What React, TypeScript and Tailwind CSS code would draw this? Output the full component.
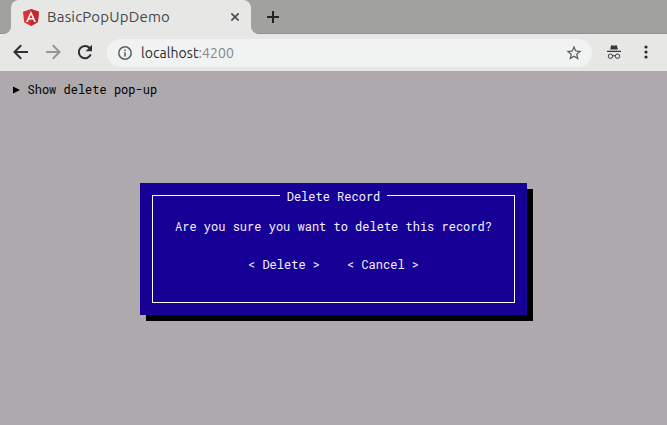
import React from "react";

function AngularLogo() {
  return (
    <svg width="16" height="17" viewBox="0 0 16 17" className="shrink-0">
      <path d="M8 0 0 2.8l1.2 10.4L8 17l6.8-3.8L16 2.8z" fill="#dd3035" />
      <path d="M8 0v17l6.8-3.8L16 2.8z" fill="#c12a32" />
      <path d="M8 1.9 3 13h1.9l1-2.5h4.2l1 2.5H13zm0 3.6L9.5 9h-3z" fill="#fff" fillRule="evenodd" />
    </svg>
  );
}

function TabStrip() {
  return (
    <div className="flex h-[34px] bg-[#e7e7e5]">
      <div className="w-[11px] rounded-br-lg border-b border-[#92918f] bg-[#a1a19f]" />
      <div className="w-[240px] bg-[linear-gradient(#a1a19f_50%,#e7e7e5_50%)]">
        <div className="flex h-full items-center rounded-t-lg bg-[#e7e7e5] pl-3">
          <AngularLogo />
          <span className="ml-2 w-[124px] whitespace-nowrap font-['Ubuntu','Noto_Sans',sans-serif] text-[15px] tracking-[0.013em] text-[#45494d]">
            BasicPopUpDemo
          </span>
          <svg width="8" height="8" viewBox="0 0 8 8" className="ml-[60px]" stroke="#4b4e51" strokeWidth="1.7">
            <path d="M.4.4l7.2 7.2M7.6.4.4 7.6" />
          </svg>
        </div>
      </div>
      <div className="flex flex-1 items-center rounded-bl-lg border-b border-[#92918f] bg-[#a1a19f] pl-4">
        <svg width="12" height="12" viewBox="0 0 12 12" stroke="#222426" strokeWidth="2">
          <path d="M6 0v12M0 6h12" />
        </svg>
      </div>
    </div>
  );
}

function Toolbar() {
  return (
    <div className="flex h-[37px] items-center bg-[#e7e7e5] pl-[13px] pt-px">
      <svg width="16" height="16" viewBox="0 0 16 16" fill="none" stroke="#2d3134" strokeWidth="2" className="-mt-0.5">
        <path d="M15 8H2M8.2 1.3 1.5 8l6.7 6.7" />
      </svg>
      <svg width="16" height="16" viewBox="0 0 16 16" fill="none" stroke="#969795" strokeWidth="2" className="-mt-0.5 ml-4">
        <path d="M1 8h13M7.8 1.3 14.5 8l-6.7 6.7" />
      </svg>
      <svg width="16" height="16" viewBox="0 0 16 16" className="-mt-0.5 ml-4">
        <path d="M13.8 10.4A6.2 6.2 0 1 1 12.7 4" fill="none" stroke="#2d3134" strokeWidth="2" />
        <path d="M15 .8v6.4H8.6z" fill="#2d3134" />
      </svg>
      <div className="ml-[14px] flex h-7 w-[485px] items-center rounded-full bg-[#f0f3f2] pl-[11px] pr-[9px]">
        <svg width="14" height="14" viewBox="0 0 14 14" fill="none" stroke="#5c6064" strokeWidth="1.5">
          <circle cx="7" cy="7" r="6.2" />
          <path d="M7 6.2v4.3M7 3.4v1.5" strokeWidth="1.6" />
        </svg>
        <span className="ml-[9px] flex-1 font-['Ubuntu','Noto_Sans',sans-serif] text-sm tracking-[0.005em] text-[#292c2f]">
          localhost<span className="text-[#7f868c]">:4200</span>
        </span>
        <svg width="18" height="18" viewBox="0 0 24 24" fill="#56595d">
          <path d="M22 9.24l-7.19-.62L12 2 9.19 8.63 2 9.24l5.46 4.73L5.82 21 12 17.27 18.18 21l-1.63-7.03L22 9.24zM12 15.4l-3.76 2.27 1-4.28-3.32-2.88 4.38-.38L12 6.1l1.71 4.04 4.38.38-3.32 2.88 1 4.28L12 15.4z" />
        </svg>
      </div>
      <svg width="14" height="14" viewBox="0 0 14 14" className="-mt-0.5 ml-[15px]">
        <path d="M3.2 4.5 4 .7Q4.2 0 5 .2l2 .5 2-.5q.8-.2 1 .5l.8 3.8zM0 5.7h14v1.2H0z" fill="#36393b" />
        <g fill="none" stroke="#36393b">
          <circle cx="3.5" cy="11.2" r="2.2" />
          <circle cx="10.5" cy="11.2" r="2.2" />
          <path d="M5.7 11q1.3-.8 2.6 0" />
        </g>
      </svg>
      <svg width="4" height="14" viewBox="0 0 4 14" fill="#292c2f" className="-mt-0.5 ml-[23px]">
        <circle cx="2" cy="2" r="1.6" />
        <circle cx="2" cy="7" r="1.6" />
        <circle cx="2" cy="12" r="1.6" />
      </svg>
    </div>
  );
}

function DeleteDialog() {
  return (
    <div className="mx-auto h-[132px] w-[387px] bg-[#170096] p-3 text-[#f4f0ff] shadow-[6px_6px_0_#000]">
      <div className="flex h-[108px] flex-col border border-t-0 border-white">
        <div className="flex h-px">
          <div className="flex-1 bg-white" />
          <span className="-mt-[7px] h-4 w-[107px] text-center leading-4">Delete Record</span>
          <div className="flex-1 bg-white" />
        </div>
        <p className="mt-[22px] text-center leading-4">Are you sure you want to delete this record?</p>
        <div className="mt-[22px] flex justify-center gap-[27px] leading-4">
          <button>&lt; Delete &gt;</button>
          <button>&lt; Cancel &gt;</button>
        </div>
      </div>
    </div>
  );
}

export default function App() {
  return (
    <div className="flex h-[425px] w-[667px] flex-col overflow-hidden bg-[#ada9ad]">
      <TabStrip />
      <Toolbar />
      <main className="flex-1 font-['Roboto_Mono','Liberation_Mono',monospace] text-xs">
        <button className="mt-[10px] flex h-4 items-center pl-[13px] text-black">
          <svg width="7" height="8" viewBox="0 0 7 8" className="mr-[7.5px] mt-0.5">
            <path d="M0 .5v7L7 4z" />
          </svg>
          Show delete pop-up
        </button>
        <div className="pt-[86px]">
          <DeleteDialog />
        </div>
      </main>
    </div>
  );
}
